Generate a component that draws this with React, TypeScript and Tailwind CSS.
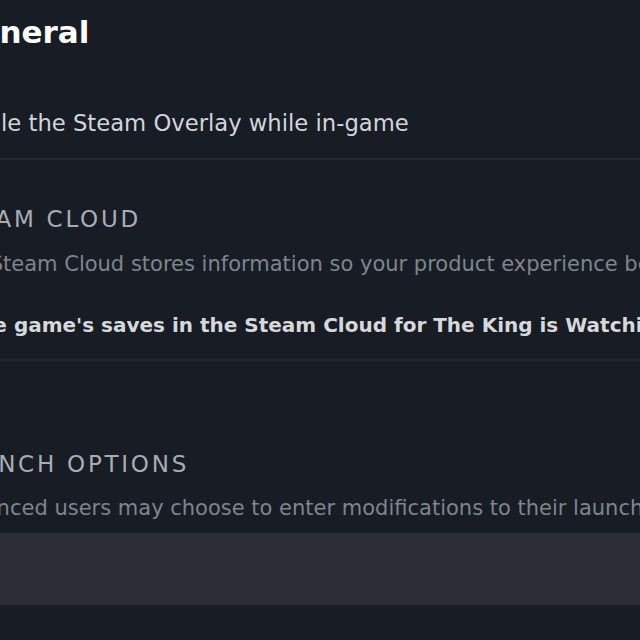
export default function App() {
  return (
    <div className="h-[640px] w-[640px] overflow-hidden bg-[#171c25] font-['DejaVu_Sans','Liberation_Sans',sans-serif] text-[#d2d5d8]">
      <div className="ml-[-56px] w-[1000px]">
        <h1 className="ml-[9px] h-[64px] text-[31px] font-bold leading-[64px] text-white">
          General
        </h1>

        <div className="border-b-2 border-[#222933] pb-[18px] pt-[42px]">
          <p className="h-[34px] text-[22.7px] leading-[34px]">
            Enable the Steam Overlay while in-game
          </p>
        </div>

        <section className="pt-[44px]">
          <h2 className="h-[30px] text-[23px] uppercase leading-[30px] tracking-[2.75px] text-[#a9adb2]">
            Steam Cloud
          </h2>
          <p className="mt-[16px] h-[28px] text-[21px] leading-[28px] text-[#7f858c]">
            The Steam Cloud stores information so your product experience behaves the same.
          </p>
          <div className="mt-[32px] border-b-2 border-[#222933] pb-[19px]">
            <p className="ml-[-38px] h-[30px] text-[20px] font-bold leading-[30px] text-[#d6d8da]">
              Keep the game's saves in the Steam Cloud for The King is Watching
            </p>
          </div>
        </section>

        <section className="pt-[88px]">
          <h2 className="h-[30px] text-[23px] uppercase leading-[30px] tracking-[2.75px] text-[#a9adb2]">
            Launch Options
          </h2>
          <p className="mt-[15px] h-[28px] text-[21px] leading-[28px] text-[#7f858c]">
            Advanced users may choose to enter modifications to their launch options.
          </p>
          <div className="mt-[11px] h-[72px] bg-[#2b2e34]" />
        </section>
      </div>
    </div>
  );
}
